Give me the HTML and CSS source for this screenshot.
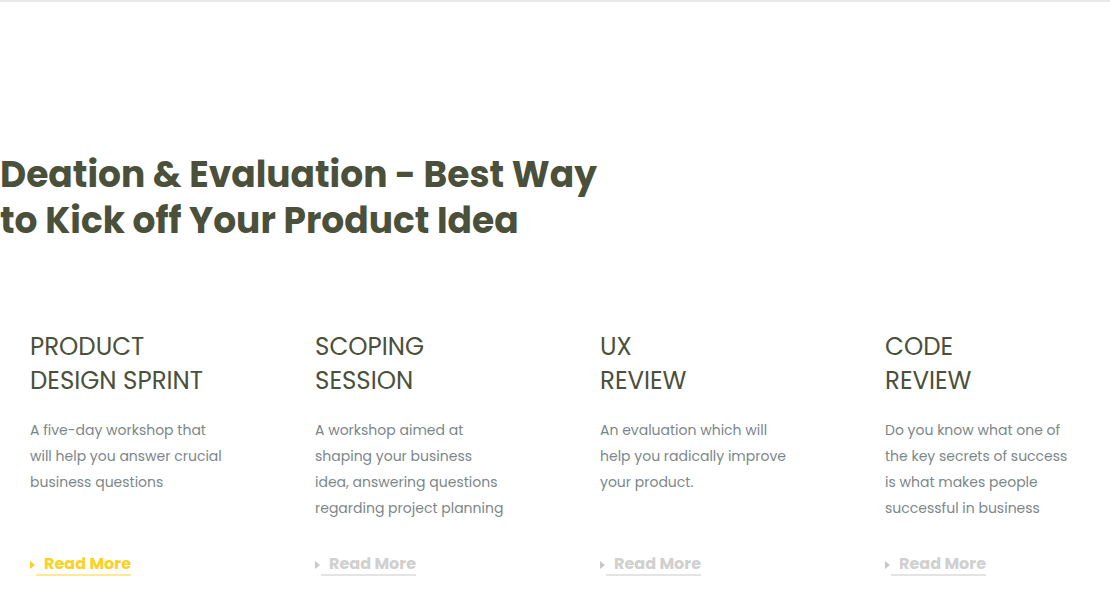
FILE: index.html
```html
<!DOCTYPE html>
<html>
<head>
<meta charset="utf-8">
<link rel="stylesheet" href="styles.css">
</head>
<body>
<div class="page">
  <section class="intro">
    <h1 class="headline">Deation &amp; Evaluation - Best Way<br>to Kick off Your Product Idea</h1>
    <div class="cards">
      <div class="card">
        <h2 class="card-title">PRODUCT<br>DESIGN SPRINT</h2>
        <p class="card-text">A five-day workshop that will help you answer crucial business questions</p>
        <a class="more more-active" href="#"><span class="tri"></span><span class="more-label">Read More</span></a>
      </div>
      <div class="card">
        <h2 class="card-title">SCOPING<br>SESSION</h2>
        <p class="card-text">A workshop aimed at shaping your business idea, answering questions regarding project planning</p>
        <a class="more" href="#"><span class="tri"></span><span class="more-label">Read More</span></a>
      </div>
      <div class="card">
        <h2 class="card-title">UX<br>REVIEW</h2>
        <p class="card-text">An evaluation which will help you radically improve your product.</p>
        <a class="more" href="#"><span class="tri"></span><span class="more-label">Read More</span></a>
      </div>
      <div class="card">
        <h2 class="card-title">CODE<br>REVIEW</h2>
        <p class="card-text">Do you know what one of the key secrets of success is what makes people successful in business</p>
        <a class="more" href="#"><span class="tri"></span><span class="more-label">Read More</span></a>
      </div>
    </div>
  </section>
</div>
</body>
</html>
```
FILE: styles.css
```css
html, body {
  margin: 0;
  padding: 0;
  background: #ffffff;
}
body {
  font-family: "Poppins", "Inter", "Open Sans", sans-serif;
}
.page {
  border-top: 2px solid #e8e8e8;
  height: 609px;
  overflow: hidden;
}
.intro {
  padding-top: 150px;
}
.headline {
  margin: 0;
  font-size: 36px;
  line-height: 46px;
  font-weight: 700;
  color: #4b503a;
}
.cards {
  display: grid;
  grid-template-columns: repeat(4, 285px);
  padding-left: 30px;
  margin-top: 86px;
}
.card {
  display: flex;
  flex-direction: column;
  align-items: flex-start;
}
.card-title {
  margin: 0;
  font-size: 24.5px;
  line-height: 34px;
  font-weight: 400;
  color: #4b503a;
}
.card-text {
  margin: 19px 0 0;
  width: 194px;
  height: 104px;
  font-size: 14px;
  line-height: 26px;
  color: #7c878a;
  font-weight: 400;
}
.more {
  margin-top: 33px;
  display: flex;
  align-items: center;
  text-decoration: none;
  color: #d0d0d0;
  font-size: 16px;
  line-height: 24px;
  font-weight: 700;
}
.tri {
  width: 0;
  height: 0;
  border-top: 4px solid transparent;
  border-bottom: 4px solid transparent;
  border-left: 5px solid #c8c8c8;
  margin-right: 1px;
}
.more-label {
  padding-left: 8px;
  border-bottom: 2px solid #e4e4e4;
  line-height: 20px;
}
.more-active {
  color: #fcd11f;
}
.more-active .tri {
  border-left-color: #fcd11f;
}
.more-active .more-label {
  border-bottom-color: #ffe896;
}
```
